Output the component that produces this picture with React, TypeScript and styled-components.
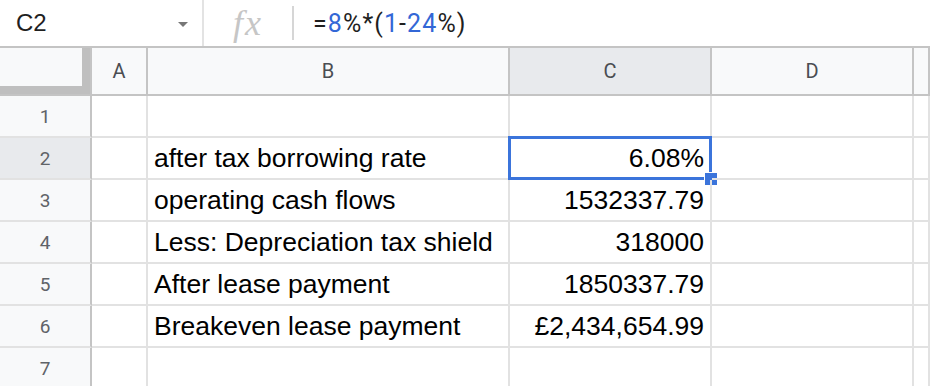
import styled, { createGlobalStyle } from "styled-components";

const GlobalStyle = createGlobalStyle`
  html, body {
    margin: 0;
    padding: 0;
    background: #fff;
    overflow: hidden;
  }
  body {
    font-family: "Liberation Sans", Arial, sans-serif;
  }
`;

const Page = styled.div`
  width: 930px;
  height: 386px;
  overflow: hidden;
  background: #fff;
`;

const FormulaBar = styled.div`
  display: flex;
  align-items: center;
  height: 46px;
  border-bottom: 2px solid #c4c4c4;
  font-family: Roboto, "Liberation Sans", sans-serif;
`;

const NameBox = styled.div`
  display: flex;
  align-items: center;
  width: 204px;
  height: 100%;
  padding-left: 16px;
  padding-right: 14px;
  box-sizing: border-box;
  border-right: 2px solid #e3e3e3;
  font-family: "Liberation Sans", Arial, sans-serif;
  font-size: 24px;
  color: #1f1f1f;
`;

const NameText = styled.span`
  flex: 1;
`;

const Caret = styled.span`
  width: 0;
  height: 0;
  border-left: 5px solid transparent;
  border-right: 5px solid transparent;
  border-top: 5px solid #777;
  margin-top: 2px;
`;

const FxBox = styled.div`
  display: flex;
  align-items: center;
  justify-content: center;
  width: 88px;
  height: 34px;
  border-right: 2px solid #d6d6d6;
  font-family: "Liberation Serif", "DejaVu Serif", serif;
  font-style: italic;
  font-size: 36px;
  color: #c6c6c6;
  letter-spacing: 2px;
`;

const FormulaText = styled.div`
  padding-left: 19px;
  font-size: 25px;
  letter-spacing: 1.1px;
  color: #1f1f1f;
`;

const Num = styled.span`
  color: #3367d6;
`;

const Grid = styled.div`
  display: grid;
  grid-template-columns: 92px 56px 362px 202px 202px 1fr;
  grid-template-rows: 48px repeat(7, 42px);
`;

const Corner = styled.div`
  background: #f8f9fa;
  border-right: 2px solid #c4c4c4;
  border-bottom: 2px solid #c4c4c4;
  box-shadow: inset -8px -8px 0 0 #bfbfbf;
`;

const ColHead = styled.div<{ $active?: boolean }>`
  display: flex;
  align-items: center;
  justify-content: center;
  background: ${(p) => (p.$active ? "#e8eaed" : "#f8f9fa")};
  border-right: 2px solid #c4c4c4;
  border-bottom: 2px solid #c4c4c4;
  font-family: Roboto, "Liberation Sans", sans-serif;
  font-size: 20px;
  color: #4a4d52;
`;

const RowHead = styled.div<{ $active?: boolean }>`
  display: flex;
  align-items: center;
  justify-content: center;
  background: ${(p) => (p.$active ? "#e8eaed" : "#f8f9fa")};
  border-right: 2px solid #c4c4c4;
  border-bottom: 2px solid #e2e2e2;
  font-family: Roboto, "Liberation Sans", sans-serif;
  font-size: 19px;
  color: #5f6368;
`;

const Cell = styled.div<{ $right?: boolean }>`
  position: relative;
  display: flex;
  align-items: center;
  justify-content: ${(p) => (p.$right ? "flex-end" : "flex-start")};
  padding: 0 6px;
  border-right: 2px solid #e2e2e2;
  border-bottom: 2px solid #e2e2e2;
  font-size: 26.5px;
  color: #000;
  white-space: nowrap;
  overflow: visible;
`;

const Selection = styled.div`
  position: absolute;
  left: -2px;
  top: -2px;
  right: -2px;
  bottom: -2px;
  border: 3px solid #3b74db;
  pointer-events: none;
`;

const Handle = styled.div`
  position: absolute;
  right: -8px;
  bottom: -8px;
  width: 12px;
  height: 12px;
  background: #3b74db;
  border-left: 1px solid #fff;
  border-top: 1px solid #fff;
`;

const rows: { label: string; value: string }[] = [
  { label: "", value: "" },
  { label: "after tax borrowing rate", value: "6.08%" },
  { label: "operating cash flows", value: "1532337.79" },
  { label: "Less: Depreciation tax shield", value: "318000" },
  { label: "After lease payment", value: "1850337.79" },
  { label: "Breakeven lease payment", value: "£2,434,654.99" },
  { label: "", value: "" },
];

export default function App() {
  return (
    <Page>
      <GlobalStyle />
      <FormulaBar>
        <NameBox>
          <NameText>C2</NameText>
          <Caret />
        </NameBox>
        <FxBox>fx</FxBox>
        <FormulaText>
          =<Num>8</Num>%*(<Num>1</Num>-<Num>24</Num>%)
        </FormulaText>
      </FormulaBar>
      <Grid>
        <Corner />
        <ColHead>A</ColHead>
        <ColHead>B</ColHead>
        <ColHead $active>C</ColHead>
        <ColHead>D</ColHead>
        <ColHead />
        {rows.map((r, i) => (
          <Row key={i} index={i + 1} label={r.label} value={r.value} />
        ))}
      </Grid>
    </Page>
  );
}

function Row({ index, label, value }: { index: number; label: string; value: string }) {
  const selected = index === 2;
  return (
    <>
      <RowHead $active={selected}>{index}</RowHead>
      <Cell />
      <Cell>{label}</Cell>
      <Cell $right>
        {value}
        {selected && (
          <Selection>
            <Handle />
          </Selection>
        )}
      </Cell>
      <Cell />
      <Cell />
    </>
  );
}
